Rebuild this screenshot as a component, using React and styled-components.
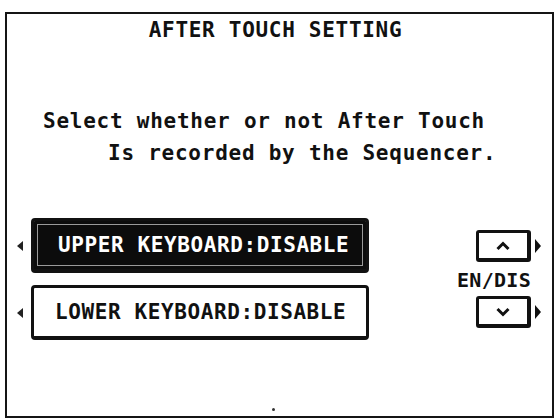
import React from "react";
import styled, { createGlobalStyle } from "styled-components";

const Global = createGlobalStyle`
  html, body {
    margin: 0;
    padding: 0;
    background: #fff;
  }
  body {
    font-family: "DejaVu Sans Mono", "Liberation Mono", monospace;
    color: #111;
  }
`;

const Screen = styled.div`
  box-sizing: border-box;
  width: 549px;
  height: 406px;
  margin: 12px 0 0 5px;
  border: 2px solid #151515;
  display: flex;
  flex-direction: column;
`;

const Title = styled.h1`
  margin: 4px 8px 0 0;
  font-size: 21px;
  line-height: 24px;
  font-weight: bold;
  letter-spacing: 0.7px;
  text-align: center;
`;

const Message = styled.p`
  margin: 63px 0 0 36px;
  font-size: 21px;
  line-height: 32px;
  font-weight: bold;
  letter-spacing: 0.75px;
  white-space: pre;
  span {
    display: block;
  }
  span + span {
    padding-left: 65px;
  }
`;

const Controls = styled.div`
  display: flex;
  margin-top: 49px;
`;

const Rows = styled.div`
  display: flex;
  flex-direction: column;
  gap: 12px;
  margin-left: 10px;
`;

const Row = styled.div`
  display: flex;
  align-items: center;
  gap: 8px;
`;

const LeftArrow = styled.span`
  width: 0;
  height: 0;
  border-top: 5px solid transparent;
  border-bottom: 5px solid transparent;
  border-right: 6px solid #222;
`;

const RightArrow = styled.span`
  width: 0;
  height: 0;
  border-top: 7px solid transparent;
  border-bottom: 7px solid transparent;
  border-left: 6px solid #111;
`;

const KeyBox = styled.div`
  box-sizing: border-box;
  width: 338px;
  height: 55px;
  display: flex;
  align-items: center;
  padding-left: ${(p) => (p.$active ? 24 : 21)}px;
  border: 3px solid #111;
  border-bottom-width: 4px;
  border-radius: 4px;
  background: ${(p) => (p.$active ? "#0c0c0c" : "#fff")};
  color: ${(p) => (p.$active ? "#fff" : "#111")};
  box-shadow: ${(p) =>
    p.$active ? "inset 0 0 0 3px #0c0c0c, inset 0 0 0 4px #9a9a9a" : "none"};
  font-size: 21px;
  font-weight: bold;
  letter-spacing: 0.6px;
  white-space: pre;
`;

const Side = styled.div`
  width: 84px;
  margin: 12px 11px 0 auto;
  display: flex;
  flex-direction: column;
`;

const StepRow = styled.div`
  display: flex;
  align-items: center;
  justify-content: flex-end;
  gap: 4px;
`;

const StepButton = styled.button`
  box-sizing: border-box;
  width: 55px;
  height: 32px;
  padding: 0;
  display: flex;
  align-items: center;
  justify-content: center;
  background: #fff;
  border: 3px solid #111;
  border-bottom-width: 4px;
  border-right-width: 4px;
  border-radius: 3px;
  color: #111;
`;

const Label = styled.div`
  margin: 8px 0 6px;
  font-size: 20px;
  line-height: 20px;
  font-weight: bold;
  letter-spacing: 0.3px;
`;

const Dot = styled.span`
  width: 3px;
  height: 3px;
  border-radius: 50%;
  background: #333;
  margin: auto 0 5px;
  align-self: center;
  transform: translateX(-6px);
`;

const Chevron = ({ up }) => (
  <svg width="16" height="10" viewBox="0 0 16 10">
    <polyline
      points={up ? "2.5,8 8,2.5 13.5,8" : "2.5,2 8,7.5 13.5,2"}
      fill="none"
      stroke="#111"
      strokeWidth="3"
    />
  </svg>
);

export default function App() {
  return (
    <>
      <Global />
      <Screen>
        <Title>AFTER TOUCH SETTING</Title>
        <Message>
          <span>Select whether or not After Touch</span>
          <span>Is recorded by the Sequencer.</span>
        </Message>
        <Controls>
          <Rows>
            <Row>
              <LeftArrow />
              <KeyBox $active>UPPER KEYBOARD:DISABLE</KeyBox>
            </Row>
            <Row>
              <LeftArrow />
              <KeyBox>LOWER KEYBOARD:DISABLE</KeyBox>
            </Row>
          </Rows>
          <Side>
            <StepRow>
              <StepButton>
                <Chevron up />
              </StepButton>
              <RightArrow />
            </StepRow>
            <Label>EN/DIS</Label>
            <StepRow>
              <StepButton>
                <Chevron />
              </StepButton>
              <RightArrow />
            </StepRow>
          </Side>
        </Controls>
        <Dot />
      </Screen>
    </>
  );
}
